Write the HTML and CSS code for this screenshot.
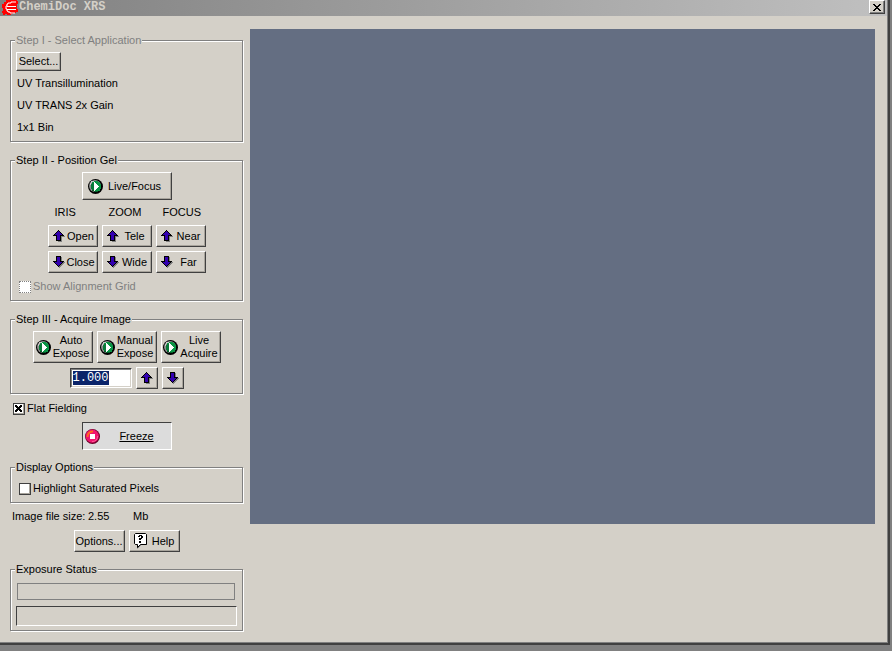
FILE: index.html
```html
<!DOCTYPE html>
<html lang="en">
<head>
<meta charset="utf-8">
<title>ChemiDoc XRS</title>
<link rel="stylesheet" href="styles.css">
</head>
<body>
<svg class="defs" aria-hidden="true">
  <symbol id="play" viewBox="0 0 15 15">
    <circle cx="7.5" cy="7.5" r="7.5" fill="#000"/>
    <circle cx="7" cy="7" r="6" fill="#8c8c8c"/>
    <path d="M3 2H6V3H4V4H3V6H2V4H3Z" fill="#c8c8c8"/>
    <path d="M6 2H10V3H12V5H13V10H12V12H10V13H6V12H4V10H3V5H4V3H6Z" fill="#0a9444"/>
    <path d="M4 10H5V11H6V12H10V13H6V12H4Z" fill="#055a28"/>
    <path d="M3 5H4V4H6V11H4V10H3Z" fill="#087a38"/>
    <path d="M6 3H7V4H8V5H9V6H10V7H11V8H10V9H9V10H8V11H7V12H6Z" fill="#fff"/>
  </symbol>
  <symbol id="stop" viewBox="0 0 15 15">
    <circle cx="7.5" cy="7.5" r="7.5" fill="#6a0028"/>
    <circle cx="7.2" cy="7.2" r="6.6" fill="#f0146e"/>
    <path d="M2.5 8A5 5 0 0 1 8 2.5" fill="none" stroke="#ff6a1e" stroke-width="2"/>
    <path d="M12.5 7A5 5 0 0 1 7 12.5" fill="none" stroke="#ff5a9a" stroke-width="1"/>
    <path d="M5 5H10V10H5Z" fill="#fff"/>
  </symbol>
  <symbol id="up" viewBox="0 0 12 12">
    <path d="M6 1H7V2H8V3H9V4H10V5H11V6H12V7H9V12H5V11H8V6H11Z" fill="#808080"/>
    <path d="M5 0H6V1H7V2H8V3H9V4H10V5H11V6H8V11H3V6H0V5H1V4H2V3H3V2H4V1H5Z" fill="#000"/>
    <path d="M5 1H6V2H7V3H8V4H9V5H7V10H4V5H2V4H3V3H4V2H5Z" fill="#3300b0"/>
  </symbol>
  <symbol id="down" viewBox="0 0 12 12">
    <path d="M8 1H9V6H12V7H11V8H10V9H9V10H8V11H7V12H6V10Z" fill="#808080"/>
    <path d="M5 11H6V10H7V9H8V8H9V7H10V6H11V5H8V0H3V5H0V6H1V7H2V8H3V9H4V10H5Z" fill="#000"/>
    <path d="M5 10H6V9H7V8H8V7H9V6H7V1H4V6H2V7H3V8H4V9H5Z" fill="#3300b0"/>
  </symbol>
</svg>

<div class="window">
  <header class="titlebar">
    <svg class="logo" width="16" height="15" viewBox="0 0 16 15" aria-hidden="true">
      <path d="M4 0H15V1H16V4H15V9H16V12H14V13H11V14H9V15H5V14H3V15H1V13H0V11H1V8H0V4H2V2H4Z" fill="#f00"/>
      <path d="M14 2H9V3H6V4H5V6H4V9H5V11H6V12H8V13H13M5 6.5H14M5 9.5H14" fill="none" stroke="#fff"/>
    </svg>
    <h1>ChemiDoc XRS</h1>
    <button class="close" type="button" aria-label="Close">
      <svg width="8" height="7" viewBox="0 0 8 7"><path d="M0 0H2V1H3V2H5V1H6V0H8V1H7V2H6V3H5V4H6V5H7V6H8V7H6V6H5V5H3V6H2V7H0V6H1V5H2V4H3V3H2V2H1V1H0Z"/></svg>
    </button>
  </header>

  <main>
    <form class="panel">
      <fieldset class="application">
        <legend class="dim">Step I - Select Application</legend>
        <button type="button" class="select">Select...</button>
        <p>UV Transillumination</p>
        <p>UV TRANS 2x Gain</p>
        <p>1x1 Bin</p>
      </fieldset>

      <fieldset class="position">
        <legend>Step II - Position Gel</legend>
        <button type="button" class="wide live"><svg class="disc"><use href="#play"/></svg><span>Live/Focus</span></button>
        <div class="lens">
          <span>IRIS</span><span>ZOOM</span><span>FOCUS</span>
          <button type="button"><svg class="arrow"><use href="#up"/></svg><span>Open</span></button>
          <button type="button"><svg class="arrow"><use href="#up"/></svg><span>Tele</span></button>
          <button type="button"><svg class="arrow"><use href="#up"/></svg><span>Near</span></button>
          <button type="button"><svg class="arrow"><use href="#down"/></svg><span>Close</span></button>
          <button type="button"><svg class="arrow"><use href="#down"/></svg><span>Wide</span></button>
          <button type="button"><svg class="arrow"><use href="#down"/></svg><span>Far</span></button>
        </div>
        <label class="check dim"><input type="checkbox" disabled>Show Alignment Grid</label>
      </fieldset>

      <fieldset class="acquire">
        <legend>Step III - Acquire Image</legend>
        <div class="row">
          <button type="button" class="tall"><svg class="disc"><use href="#play"/></svg><span>Auto<br>Expose</span></button>
          <button type="button" class="tall"><svg class="disc"><use href="#play"/></svg><span>Manual<br>Expose</span></button>
          <button type="button" class="tall"><svg class="disc"><use href="#play"/></svg><span>Live<br>Acquire</span></button>
        </div>
        <div class="row">
          <input class="seconds" type="text" value="1.000" aria-label="Exposure time">
          <button type="button" class="step" aria-label="Increase"><svg class="arrow"><use href="#up"/></svg></button>
          <button type="button" class="step" aria-label="Decrease"><svg class="arrow"><use href="#down"/></svg></button>
        </div>
      </fieldset>

      <label class="check flat"><input type="checkbox" checked>Flat Fielding</label>
      <button type="button" class="wide freeze"><svg class="disc"><use href="#stop"/></svg><span>Freeze</span></button>

      <fieldset class="display">
        <legend>Display Options</legend>
        <label class="check"><input type="checkbox">Highlight Saturated Pixels</label>
      </fieldset>

      <div class="size"><span>Image file size:</span><span>2.55</span><span>Mb</span></div>
      <div class="row">
        <button type="button" class="small">Options...</button>
        <button type="button" class="small help">
          <svg width="14" height="16" viewBox="0 0 14 16" aria-hidden="true">
            <path d="M3 15V12H1V1H13V12H7V13H6V14H5V15H4V16" fill="#808080"/>
            <path d="M1.5 .5H11.5L12.5 1.5V11.5H6.5L3.5 14.5V11.5H1.5L.5 10.5V1.5Z" fill="#fff" stroke="#000"/>
            <path d="M4 3H5V2H8V3H9V5H8V6H7V7H5V5H7V3H6V4H4ZM5 8H7V10H5Z"/>
          </svg><span>Help</span></button>
      </div>

      <fieldset class="status">
        <legend>Exposure Status</legend>
        <div class="bar"></div>
        <div class="message"></div>
      </fieldset>
    </form>
    <section class="preview" aria-label="Image preview"></section>
  </main>
</div>
</body>
</html>
```
FILE: styles.css
```css
* { box-sizing: border-box; }

body {
  margin: 0;
  min-height: 100vh;
  display: flex;
  padding: 0 2px 7px 0;
  background: #808080;
  color: #000;
  font: 11px/13px "Liberation Sans", Arial, sans-serif;
}

.defs { display: none; }

.window {
  flex: 1;
  background: #d4d0c8;
  border-right: 2px solid #404040;
  border-bottom: 2px solid #404040;
  box-shadow: inset -1px -1px 0 #808080;
}

.titlebar {
  display: flex;
  align-items: flex-start;
  height: 16px;
  margin-right: 1px;
  padding: 0 2px;
  background: linear-gradient(to right, #808080, #c0c0c0);
}

.logo { flex: none; }

h1 {
  flex: 1;
  margin: 0 0 0 1px;
  color: #d4d0c8;
  font: bold 12px/15px "Liberation Mono", monospace;
}

button {
  display: flex;
  align-items: center;
  justify-content: center;
  padding: 0;
  border: 1px solid;
  border-color: #fff #404040 #404040 #fff;
  background: #d4d0c8;
  box-shadow: inset -1px -1px 0 #a8a49c;
  color: #000;
  font: inherit;
}

button svg { flex: none; }

.close {
  width: 16px;
  height: 14px;
  box-shadow: inset -1px -1px 0 #808080;
}

main {
  display: flex;
  align-items: flex-start;
  padding: 13px 13px 12px 10px;
}

.panel {
  flex: none;
  width: 233px;
  margin: 5px 7px 0 0;
}

.preview {
  flex: 1;
  aspect-ratio: 625 / 495;
  background: #646e82;
}

fieldset {
  margin: 0;
  padding: 5px;
  border: 1px solid #808080;
  box-shadow: 1px 1px 0 #fff, inset 1px 1px 0 #fff;
}

legend {
  padding: 0 1px;
  margin-left: -1px;
  background: #d4d0c8;
}

.dim { color: #808080; }

.application { padding-bottom: 3px; }

.application p {
  margin: 0 0 0 1px;
  line-height: 22px;
}

.select { width: 45px; height: 19px; margin-bottom: 1px; }

.position { margin-top: 12px; }

.wide {
  width: 90px;
  height: 28px;
  margin: 0 auto;
  gap: 5px;
}

.live { padding-right: 4px; }

.disc { width: 15px; height: 15px; }
.arrow { width: 12px; height: 12px; }

.lens {
  display: grid;
  grid-template-columns: repeat(3, 50px);
  justify-content: center;
  gap: 4px;
  margin-top: 5px;
}

.lens > span {
  padding: 0 0 2px 7px;
  line-height: 14px;
}

.lens button { height: 22px; padding-left: 4px; }
.lens button span { flex: 1; text-align: center; }

.check {
  display: flex;
  align-items: center;
  gap: 2px;
  margin-left: 3px;
}

.check input {
  appearance: none;
  width: 12px;
  height: 12px;
  margin: 0;
  border: 1px solid #404040;
  background: #fff;
  box-shadow: inset -1px -1px 0 #a8a49c;
}

.check input:disabled {
  border: 1px dotted #808080;
  box-shadow: none;
}

.check input:checked {
  background:
    linear-gradient(45deg, transparent 42%, #000 42% 58%, transparent 58%) 1px 1px / 7px 7px no-repeat,
    linear-gradient(-45deg, transparent 42%, #000 42% 58%, transparent 58%) 1px 1px / 7px 7px no-repeat,
    #fff;
}

.position .check { margin-top: 7px; margin-bottom: 2px; }

.acquire { margin-top: 12px; padding-bottom: 4px; }

.row {
  display: flex;
  align-items: center;
  justify-content: center;
  gap: 4px;
}

.row + .row { margin-top: 4px; }

.tall { width: 60px; height: 32px; gap: 2px; }

.seconds {
  width: 62px;
  height: 20px;
  padding: 2px;
  border: 1px solid;
  border-color: #404040 #fff #fff #404040;
  background: linear-gradient(#0a246a, #0a246a) 0 0 / 36px 100% no-repeat content-box, #fff;
  box-shadow: inset 1px 1px 0 #808080, inset -1px -1px 0 #d4d0c8;
  color: #fff;
  font: 12px/14px "Liberation Mono", monospace;
}

.step { width: 22px; height: 22px; }

.flat { margin-top: 8px; }

.freeze {
  margin-top: 7px;
  padding-right: 14px;
  gap: 19px;
  border-color: #404040 #fff #fff #404040;
  background: #dcdcdc;
  box-shadow: none;
  text-decoration: underline;
}

.display { margin-top: 11px; padding-top: 8px; padding-bottom: 7px; }

.size {
  display: flex;
  margin: 7px 0 7px 2px;
}

.size span:nth-child(1) { width: 76px; }
.size span:nth-child(2) { width: 45px; }

.small { width: 51px; height: 22px; gap: 4px; }

.status { margin-top: 11px; padding: 7px 5px 4px; }

.bar {
  height: 17px;
  margin: 0 2px 6px 1px;
  border: 1px solid #808080;
}

.message {
  height: 20px;
  border: 1px solid;
  border-color: #404040 #fff #fff #404040;
}
```
